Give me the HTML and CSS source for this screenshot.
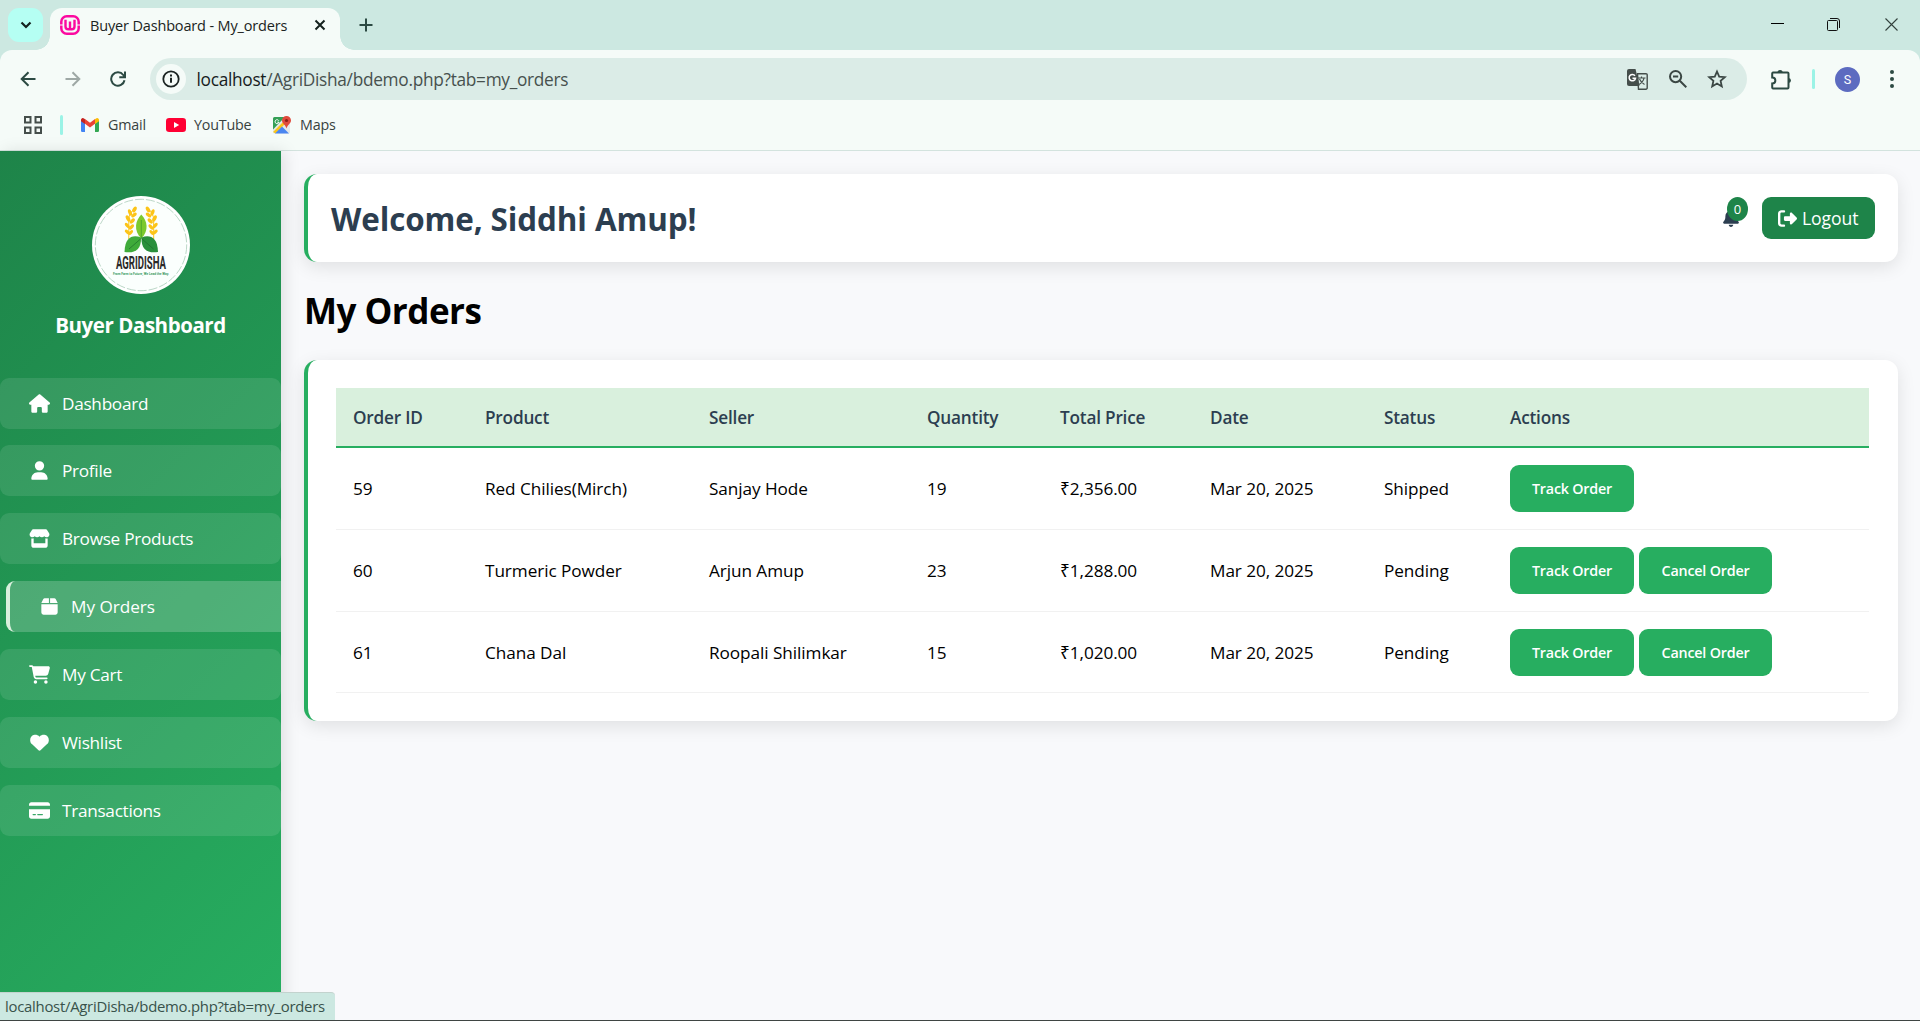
FILE: index.html
```html
<!DOCTYPE html>
<html lang="en">
<head>
<meta charset="utf-8">
<title>Buyer Dashboard - My_orders</title>
<link rel="stylesheet" href="styles.css">
</head>
<body>
<header class="browser">
  <div class="tabstrip">
    <div class="tab-search"><svg width="12" height="8" viewBox="0 0 12 8"><path d="M1.5 1.5 6 6l4.500-4.500" fill="none" stroke="#14211e" stroke-width="2.200"/></svg></div>
    <div class="tab">
      <svg class="favicon" width="20" height="20" viewBox="0 0 20 20" fill="none" stroke="#fb0aa0"><rect x="1.300" y="1.300" width="17.400" height="17.400" rx="5.500" stroke-width="2.500"/><path d="M5.500 4.800v6.700a2.800 2.800 0 0 0 2.800 2.800h3.400a2.800 2.800 0 0 0 2.800-2.800V4.800M10 6.500v7.500" stroke-width="2.400"/><path d="M0 10h3M17 10h3" stroke="#f5fbf8" stroke-width="1.200"/></svg>
      <span class="tab-title">Buyer Dashboard - My_orders</span>
      <svg class="tab-close" width="12" height="12" viewBox="0 0 12 12"><path d="m1.500 1.500 9 9m0-9-9 9" stroke="#14211e" stroke-width="2"/></svg>
    </div>
    <svg class="new-tab" width="14" height="14" viewBox="0 0 14 14"><path d="M7 .5v13M.5 7h13" stroke="#2c4a43" stroke-width="2"/></svg>
    <div class="window-controls">
      <svg width="13" height="13" viewBox="0 0 13 13"><path d="M0 5.500h13" stroke="#000"/></svg>
      <svg width="13" height="13" viewBox="0 0 13 13" fill="none" stroke="#111"><rect x=".5" y="2.500" width="10" height="10" rx="1"/><path d="M3 .5h7a2.500 2.500 0 0 1 2.500 2.500v7"/></svg>
      <svg width="13" height="13" viewBox="0 0 13 13"><path d="m.5.5 12 12m0-12-12 12" stroke="#33413d" stroke-width="1.100"/></svg>
    </div>
  </div>
  <div class="toolbar">
    <nav class="nav-buttons">
      <svg width="16" height="16" viewBox="0 0 16 16" fill="none" stroke="#2c4a43" stroke-width="2"><path d="M15.500 8H2M8.500 1.200 1.700 8l6.800 6.800"/></svg>
      <svg width="16" height="16" viewBox="0 0 16 16" fill="none" stroke="#9ea8a5" stroke-width="2"><path d="M.5 8H14M7.500 1.200 14.300 8l-6.800 6.800"/></svg>
      <svg width="16" height="16" viewBox="0 0 16 16" fill="none" stroke="#2c4a43" stroke-width="2"><path d="M14.500 9.200A6.700 6.700 0 1 1 13.300 4L14.800 6M15 .5v5.700H9.300"/></svg>
    </nav>
    <div class="omnibox">
      <span class="site-info"><svg width="18" height="18" viewBox="0 0 18 18"><circle cx="9" cy="9" r="7.700" fill="none" stroke="#1b2422" stroke-width="1.800"/><path d="M9 7.700v5M9 4.600v2" stroke="#1b2422" stroke-width="2"/></svg></span>
      <span class="url"><b>localhost</b>/AgriDisha/bdemo.php?tab=my_orders</span>
      <div class="omnibox-actions">
        <svg width="21" height="21" viewBox="0 0 21 21"><path d="M10.500 4.700H19a1.200 1.200 0 0 1 1.200 1.200V19a1.200 1.200 0 0 1-1.200 1.200h-7.500z" fill="none" stroke="#454e4b" stroke-width="1.400"/><path d="M2 0h6.500l4 17H2a2 2 0 0 1-2-2V2a2 2 0 0 1 2-2z" fill="#454e4b"/><path d="M8 6.800A3.200 3.200 0 1 0 8.500 9.300H5.500" fill="none" stroke="#fff" stroke-width="1.500"/><path d="M11 9h7.500M14.500 7.500V9M17 9c-.5 3-2.500 5-5 6.500M12.500 10c1 2.500 2.500 4 5 5.500" fill="none" stroke="#454e4b" stroke-width="1.200"/></svg>
        <svg width="18" height="18" viewBox="0 0 18 18" fill="none" stroke="#3b4744" stroke-width="2"><circle cx="6.600" cy="6.600" r="5.600"/><path d="m10.800 10.800 6.500 6.500M4 6.600h5.200"/></svg>
        <svg width="20" height="20" viewBox="0 0 20 20"><path d="m10 2.500 2.200 5.200 5.600.5-4.200 3.700 1.200 5.500-4.800-2.900-4.800 2.900 1.200-5.500L2.200 8.200l5.600-.5z" fill="none" stroke="#3b4744" stroke-width="1.800"/></svg>
      </div>
    </div>
    <svg class="extensions" width="21" height="21" viewBox="0 0 21 21"><path d="M2 3.500h14.500a1 1 0 0 1 1 1V18.500a1 1 0 0 1-1 1H2a1 1 0 0 1-.800-1v-4c4.200 0 4.200-6 0-6v-4a1 1 0 0 1 .800-1z" fill="none" stroke="#2c4a43" stroke-width="2"/><path d="M6.500 3.500a2.600 2.600 0 0 1 5.200 0zM17.500 9a2.500 2.500 0 0 1 0 5z" fill="#2c4a43"/></svg>
    <i class="divider"></i>
    <span class="avatar">S</span>
    <svg class="more" width="4" height="18" viewBox="0 0 4 18" fill="#2c4a43"><circle cx="2" cy="2" r="2"/><circle cx="2" cy="9" r="2"/><circle cx="2" cy="16" r="2"/></svg>
  </div>
  <div class="bookmarks">
    <svg class="apps" width="18" height="18" viewBox="0 0 18 18" fill="none" stroke="#454e4b" stroke-width="2"><path d="M1 1h5.500v5.500H1zM11.500 1H17v5.500h-5.500zM1 11.500h5.500V17H1zM11.500 11.500H17V17h-5.500z"/></svg>
    <i class="divider"></i>
    <span class="bookmark gmail"><svg width="18" height="14" viewBox="0 0 18 14"><path d="M0 2.500 4 5.500V14H1.200A1.200 1.200 0 0 1 0 12.800z" fill="#4285f4"/><path d="m14 5.500 4-3v10.300a1.200 1.200 0 0 1-1.200 1.200H14z" fill="#34a853"/><path d="M4 1 9 4.800 14 1v4.800L9 9.600 4 5.800z" fill="#ea4335"/><path d="M0 3.200V2A1.900 1.900 0 0 1 3 .4l1 .8v4.900z" fill="#c5221f"/><path d="M18 3.200V2a1.900 1.900 0 0 0-3-1.600l-1 .8v4.900z" fill="#fbbc04"/></svg><span class="bookmark-name">Gmail</span></span>
    <span class="bookmark youtube"><svg width="20" height="14" viewBox="0 0 20 14"><rect width="20" height="14" rx="3.200" fill="#f03"/><path d="m8 4 5.200 3L8 10z" fill="#fff"/></svg><span class="bookmark-name">YouTube</span></span>
    <span class="bookmark maps"><svg width="18" height="18" viewBox="0 0 18 18"><rect y="1" width="17" height="16.500" rx="1.500" fill="#e4e8e9"/><path d="M1.500 1H12L0 13.500V2.500A1.500 1.500 0 0 1 1.500 1z" fill="#34a056"/><path d="M0 16 12 4l2 2L2.500 17.500z" fill="#fbc51b"/><path d="m9 10.500 7 7H2z" fill="#4a86f0"/><path d="M13.500 0A4.500 4.500 0 0 0 9 4.500c0 3 3.500 4 4.500 8 1-4 4.500-5 4.500-8A4.500 4.500 0 0 0 13.500 0z" fill="#e04a3c"/><circle cx="13.500" cy="4.500" r="1.600" fill="#8c1f17"/><path d="M5.800 4.700A2 2 0 1 0 6 6.200H4.300" fill="none" stroke="#fff"/></svg><span class="bookmark-name">Maps</span></span>
  </div>
</header>

<div class="page">
  <aside class="sidebar">
    <svg class="logo" viewBox="0 0 98 98">
      <circle cx="49" cy="49" r="49" fill="#fff"/>
      <circle cx="49" cy="49" r="45.700" fill="#fbfffd" stroke="#a9cdb9" stroke-width=".8" stroke-dasharray="9 2"/>
      <g id="wheat" fill="#fcc418"><path d="M36.800 43V24c0-5 3-9 6-12" fill="none" stroke="#fcc418" stroke-width="1"/><ellipse cx="42.500" cy="13.500" rx="1.800" ry="3.200" transform="rotate(30 42.500 13.500)"/><ellipse cx="38" cy="16.500" rx="1.800" ry="3.400" transform="rotate(-20 38 16.500)"/><ellipse cx="42" cy="19" rx="1.700" ry="3.200" transform="rotate(50 42 19)"/><ellipse cx="36" cy="22.500" rx="1.800" ry="3.400" transform="rotate(-30 36 22.500)"/><ellipse cx="40.300" cy="25" rx="1.700" ry="3.200" transform="rotate(45 40.300 25)"/><ellipse cx="35.300" cy="29.500" rx="1.700" ry="3.200" transform="rotate(-40 35.300 29.500)"/><ellipse cx="39.500" cy="31" rx="1.700" ry="3.200" transform="rotate(40 39.500 31)"/><ellipse cx="35.300" cy="36" rx="1.600" ry="3" transform="rotate(-50 35.300 36)"/><ellipse cx="38.700" cy="36.500" rx="1.600" ry="3" transform="rotate(40 38.700 36.500)"/></g>
      <use href="#wheat" transform="matrix(-1 0 0 1 98.500 0)"/>
      <path d="M49.300 18.500c6 6 8 16 0 24-8-8-6-18 0-24z" fill="#7bc92e"/><path d="M49.300 24v19" stroke="#3c9a2c" stroke-width=".7"/>
      <path d="M49 41.500c-8-3-16-1-16.500 14.500 10 1.500 17-2 16.500-14.500z" fill="#3fab3a"/><path d="M49.500 41.500c8-3 16-1 16.500 14.500-10 1.500-17-2-16.500-14.500z" fill="#2a8f3c"/>
      <path d="M48.500 43 37 53m13-10 11.500 10" stroke="#1d6e2b" stroke-width=".7"/>
      <text class="logo-name" x="24" y="73" textLength="50" lengthAdjust="spacingAndGlyphs">AGRIDISHA</text>
      <text class="logo-motto" x="21" y="78.500" textLength="56" lengthAdjust="spacingAndGlyphs">From Farm to Future, We Lead the Way.</text>
    </svg>
    <h2 class="brand">Buyer Dashboard</h2>
    <nav class="menu">
      <a class="item"><svg viewBox="0 0 576 512"><path d="M575.8 255.5c0 18-15 32.100-32 32.100h-32l.7 160.200c0 2.700-.2 5.400-.5 8.100V472c0 22.100-17.900 40-40 40H456c-1.100 0-2.200 0-3.300-.1c-1.400 .1-2.800 .1-4.200 .1H416 392c-22.100 0-40-17.900-40-40V448 384c0-17.700-14.300-32-32-32H256c-17.700 0-32 14.300-32 32v64 24c0 22.100-17.900 40-40 40H160 128.100c-1.500 0-3-.1-4.500-.2c-1.200 .1-2.400 .2-3.600 .2H104c-22.100 0-40-17.900-40-40V360c0-.9 0-1.900 .1-2.800V287.600H32c-18 0-32-14-32-32.100c0-9 3-17 10-24L266.400 8c7-7 15-8 22-8s15 2 21 7L564.800 231.500c8 7 12 15 11 24z"/></svg>Dashboard</a>
      <a class="item"><svg viewBox="-64 0 576 512"><path d="M224 256A128 128 0 1 0 224 0a128 128 0 1 0 0 256zm-45.700 48C79.800 304 0 383.800 0 482.300C0 498.700 13.300 512 29.700 512H418.300c16.400 0 29.700-13.300 29.700-29.700C448 383.800 368.200 304 269.700 304H178.300z"/></svg>Profile</a>
      <a class="item"><svg viewBox="0 0 576 512"><path d="M547.600 103.800L490.300 13.100C485.200 5 476.100 0 466.400 0H109.600C99.900 0 90.800 5 85.700 13.100L28.300 103.800c-29.600 46.800-3.400 111.900 51.900 119.400c4 .5 8.100 .8 12.100 .8c26.100 0 49.300-11.400 65.200-29c15.900 17.600 39.100 29 65.200 29c26.100 0 49.300-11.400 65.200-29c15.900 17.600 39.100 29 65.200 29c26.200 0 49.300-11.400 65.200-29c16 17.600 39.100 29 65.200 29c4.100 0 8.100-.3 12.100-.8c55.500-7.400 81.800-72.500 52.100-119.400zM499.700 254.900l-.1 0c-5.300 .7-10.700 1.100-16.200 1.100c-12.400 0-24.300-1.900-35.400-5.300V384H128V250.600c-11.200 3.500-23.200 5.400-35.600 5.400c-5.500 0-11-.4-16.300-1.100l-.1 0c-4.100-.6-8.100-1.300-12-2.300V384v64c0 35.300 28.700 64 64 64H448c35.300 0 64-28.700 64-64V384 252.600c-4 1-8 1.800-12.300 2.300z"/></svg>Browse Products</a>
      <a class="item active"><svg viewBox="-64 0 576 512"><path d="M50.700 58.500L0 160H208V32H93.700C75.500 32 58.900 42.300 50.700 58.500zM240 160H448L397.300 58.500C389.100 42.300 372.500 32 354.300 32H240V160zm208 32H0V416c0 35.300 28.700 64 64 64H384c35.300 0 64-28.700 64-64V192z"/></svg>My Orders</a>
      <a class="item"><svg viewBox="0 0 576 512"><path d="M0 24C0 10.700 10.700 0 24 0H69.500c22 0 41.500 12.800 50.600 32h411c26.300 0 45.500 25 38.600 50.400l-41 152.300c-8.500 31.400-37 53.300-69.500 53.300H170.700l5.400 28.500c2.200 11.300 12.100 19.500 23.600 19.500H488c13.300 0 24 10.700 24 24s-10.700 24-24 24H199.700c-34.600 0-64.300-24.600-70.700-58.500L77.400 54.500c-.7-3.800-4-6.500-7.900-6.500H24C10.700 48 0 37.300 0 24zM128 464a48 48 0 1 1 96 0 48 48 0 1 1 -96 0zm336-48a48 48 0 1 1 0 96 48 48 0 1 1 0-96z"/></svg>My Cart</a>
      <a class="item"><svg viewBox="-32 0 576 512"><path d="M47.600 300.400L228.300 469.100c7.500 7 17.400 10.900 27.700 10.900s20.200-3.900 27.700-10.900L464.400 300.400c30.400-28.300 47.600-68 47.600-109.500v-5.800c0-69.900-50.500-129.500-119.400-141C347 36.500 300.600 51.400 268 84L256 96 244 84c-32.600-32.600-79-47.500-124.600-39.900C50.500 55.600 0 115.200 0 185.100v5.800c0 41.500 17.200 81.200 47.600 109.500z"/></svg>Wishlist</a>
      <a class="item"><svg viewBox="0 0 576 512"><path d="M64 32C28.700 32 0 60.700 0 96v32H576V96c0-35.300-28.700-64-64-64H64zM576 224H0V416c0 35.300 28.700 64 64 64H512c35.300 0 64-28.700 64-64V224zM112 352h64c8.800 0 16 7.200 16 16s-7.200 16-16 16H112c-8.800 0-16-7.200-16-16s7.200-16 16-16zm112 16c0-8.800 7.200-16 16-16H368c8.800 0 16 7.200 16 16s-7.200 16-16 16H240c-8.800 0-16-7.200-16-16z"/></svg>Transactions</a>
    </nav>
  </aside>

  <main class="content">
    <section class="card welcome">
      <h1 class="greeting">Welcome, Siddhi Amup!</h1>
      <div class="welcome-actions">
        <div class="bell"><svg width="16" height="18" viewBox="0 0 448 512"><path d="M224 0c-17.700 0-32 14.300-32 32V51.200C119 66 64 130.600 64 208v18.800c0 47-17.300 92.400-48.500 127.600l-7.400 8.300c-8.400 9.400-10.400 22.900-5.300 34.400S19.400 416 32 416H416c12.600 0 24-7.400 29.200-18.900s3.100-25-5.300-34.400l-7.400-8.300C401.300 319.200 384 273.900 384 226.800V208c0-77.400-55-142-128-156.800V32c0-17.700-14.300-32-32-32zm45.300 493.300c12-12 18.700-28.300 18.700-45.300H224 160c0 17 6.700 33.300 18.700 45.300s28.300 18.700 45.300 18.700s33.300-6.700 45.300-18.700z"/></svg><span class="count">0</span></div>
        <a class="logout"><svg width="19" height="19" viewBox="0 0 512 512"><path d="M377.900 105.900L500.700 228.700c7.200 7.200 11.300 17.100 11.300 27.300s-4.100 20.100-11.300 27.300L377.900 406.100c-6.400 6.400-15 9.900-24 9.900c-18.700 0-33.900-15.200-33.900-33.900l0-62.100-128 0c-17.700 0-32-14.300-32-32l0-64c0-17.700 14.300-32 32-32l128 0 0-62.100c0-18.700 15.200-33.900 33.900-33.900c9 0 17.600 3.600 24 9.900zM160 96L96 96c-17.700 0-32 14.300-32 32l0 256c0 17.700 14.300 32 32 32l64 0c17.700 0 32 14.300 32 32s-14.300 32-32 32l-64 0c-53 0-96-43-96-96L0 128C0 75 43 32 96 32l64 0c17.700 0 32 14.300 32 32s-14.300 32-32 32z"/></svg>Logout</a>
      </div>
    </section>
    <h1 class="title">My Orders</h1>
    <section class="card orders">
      <table class="table">
        <colgroup><col class="c-id"><col class="c-product"><col class="c-seller"><col class="c-qty"><col class="c-total"><col class="c-date"><col class="c-status"><col></colgroup>
        <thead><tr><th>Order ID</th><th>Product</th><th>Seller</th><th>Quantity</th><th>Total Price</th><th>Date</th><th>Status</th><th>Actions</th></tr></thead>
        <tbody>
          <tr><td>59</td><td>Red Chilies(Mirch)</td><td>Sanjay Hode</td><td>19</td><td>₹2,356.00</td><td>Mar 20, 2025</td><td>Shipped</td><td><div class="actions"><button class="btn track">Track Order</button></div></td></tr>
          <tr><td>60</td><td>Turmeric Powder</td><td>Arjun Amup</td><td>23</td><td>₹1,288.00</td><td>Mar 20, 2025</td><td>Pending</td><td><div class="actions"><button class="btn track">Track Order</button><button class="btn cancel">Cancel Order</button></div></td></tr>
          <tr><td>61</td><td>Chana Dal</td><td>Roopali Shilimkar</td><td>15</td><td>₹1,020.00</td><td>Mar 20, 2025</td><td>Pending</td><td><div class="actions"><button class="btn track">Track Order</button><button class="btn cancel">Cancel Order</button></div></td></tr>
        </tbody>
      </table>
    </section>
  </main>
</div>
<div class="status-bubble">localhost/AgriDisha/bdemo.php?tab=my_orders</div>
</body>
</html>
```
FILE: styles.css
```css
* { box-sizing: border-box; }
body {
  margin: 0;
  height: 1021px;
  display: flex;
  flex-direction: column;
  overflow: hidden;
  background: #f8f9fb;
  border-bottom: 1px solid #3f4543;
  font-family: "Open Sans", "Noto Sans", sans-serif;
  font-size: 17.2px;
  color: #000;
}
svg { display: block; flex: none; }

/* Browser frame */
.browser { flex: none; height: 151px; background: #cce8e1; border-bottom: 1px solid #d3e3de; }
.tabstrip { display: flex; height: 50px; padding-left: 8px; align-items: flex-start; }
.tab-search {
  width: 35px; height: 34px; margin-top: 8px; border-radius: 11px; background: #b5fff3;
  display: flex; align-items: center; justify-content: center;
}
.tab {
  position: relative;
  display: flex; align-items: center;
  width: 290px; height: 42px; margin: 8px 0 0 7px; padding: 0 14px 8px 10px;
  background: #f5fbf8; border-radius: 12px 12px 0 0;
}
.tab::before, .tab::after {
  content: ""; position: absolute; bottom: 0; width: 14px; height: 14px;
}
.tab::before { left: -14px; background: radial-gradient(circle at 0 0, transparent 13.5px, #f5fbf8 14px); }
.tab::after { right: -14px; background: radial-gradient(circle at 100% 0, transparent 13.5px, #f5fbf8 14px); }
.tab-title { margin-left: 10px; font-size: 14.5px; letter-spacing: -0.16px; color: #1a2422; white-space: nowrap; }
.tab-close { margin-left: auto; }
.new-tab { margin: 18px 0 0 19px; }
.window-controls { display: flex; gap: 44px; margin: 18px 22px 0 auto; }
.window-controls svg:nth-child(2) { margin: 0 1px 0 -1px; }
.toolbar { display: flex; align-items: center; height: 58px; padding: 0 26px 0 20px; background: #f5fbf8; border-radius: 12px 12px 0 0; }
.nav-buttons { display: flex; gap: 29px; }
.omnibox {
  display: flex; align-items: center;
  flex: none; width: 1597px; height: 42px; margin-left: 24px; padding: 0 20px 0 6px;
  background: #dbece7; border-radius: 21px;
}
.site-info { width: 30px; height: 30px; border-radius: 50%; background: #f5fbf8; display: flex; align-items: center; justify-content: center; }
.url { margin-left: 10.500px; font-size: 17.3px; letter-spacing: -0.3px; color: #47514e; }
.url b { font-weight: 400; color: #16201d; }
.omnibox-actions { display: flex; align-items: center; gap: 20.5px; margin-left: auto; }
.extensions { margin-left: 24px; }
.divider { width: 3px; height: 20px; border-radius: 2px; background: #9bf3e6; }
.toolbar .divider { margin-left: 20px; }
.avatar {
  width: 25px; height: 25px; margin-left: 20px; border-radius: 50%;
  background: #5c6bc0; color: #fff; font: 12.5px/25px Roboto, sans-serif; text-align: center;
}
.more { margin-left: auto; }
.bookmarks {
  display: flex; align-items: center; height: 42px; padding: 0 0 8px 23.500px;
  background: #f5fbf8; color: #38423f; font-size: 14.3px; letter-spacing: -0.2px;
}
.bookmarks .divider { margin: 0 18px 0 18.500px; }
.bookmark { display: flex; align-items: center; }
.bookmark svg { margin-right: 9px; }
.bookmark-name { padding-bottom: 2px; }
.gmail { width: 85px; }
.youtube { width: 107px; }
.youtube svg { margin-right: 8px; }

/* Page */
.page { flex: 1; display: flex; min-height: 0; }
.sidebar {
  flex: none; width: 281px; padding-top: 45px;
  background: linear-gradient(135deg, #1e8449, #27ae60);
  box-shadow: 4px 0 15px rgba(0, 0, 0, 0.1);
  color: #fff;
}
.logo { width: 98px; height: 98px; margin: 0 auto; overflow: visible; }
.logo-name { font: 700 18px "Roboto", sans-serif; fill: #2b2a29; }
.logo-motto { font: 700 4px "Roboto", sans-serif; fill: #3d9a63; }
.brand { margin: 17px 0 38.600px; font-size: 20.5px; line-height: 28px; letter-spacing: -0.45px; text-align: center; }
.menu { display: flex; flex-direction: column; gap: 16.85px; }
.item {
  display: flex; align-items: center; gap: 12px;
  height: 51px; padding-left: 29px; border-radius: 9px;
  background: rgba(255, 255, 255, 0.1); letter-spacing: -0.28px;
}
.item svg { width: 21px; height: 19px; fill: #fff; }
.item.active {
  margin-left: 6px; padding-left: 29px; gap: 11px;
  border-left: 4px solid #d9f0dd; border-radius: 9px 0 0 9px;
  background: rgba(255, 255, 255, 0.2); letter-spacing: -0.05px;
}
.content { flex: 1; padding: 23px 22px 0 23px; }
.card { background: #fff; border-left: 4px solid #27ae60; border-radius: 13px; box-shadow: 0 5px 18px rgba(0, 0, 0, 0.1); }
.welcome { display: flex; align-items: center; justify-content: space-between; height: 88px; padding: 0 23px 0 23px; }
.greeting { margin: 0; font-size: 31.4px; letter-spacing: -0.1px; color: #2c3e50; }
.welcome-actions { display: flex; align-items: center; }
.bell { position: relative; margin-right: 23px; }
.bell svg { fill: #2c3e50; }
.count {
  position: absolute; left: 4px; top: -12px; width: 21px; height: 24px; border-radius: 50%;
  background: #1e8449; color: #fff; font-size: 13px; line-height: 24px; text-align: center;
}
.logout {
  display: flex; align-items: center; gap: 5px; width: 113px; height: 42px; padding-left: 16px;
  border-radius: 9px; background: #1e8449; color: #fff; font-size: 17.6px; letter-spacing: -0.1px;
}
.logout svg { fill: #fff; }
.title { margin: 24px 0 25px; font-size: 35px; line-height: 49px; letter-spacing: -0.5px; }
.orders { padding: 28px 29px 28px 28px; }
.table { width: 100%; border-collapse: separate; border-spacing: 0; table-layout: fixed; letter-spacing: -0.07px; }
.c-id { width: 132px; }
.c-product { width: 224px; }
.c-seller { width: 218px; }
.c-qty { width: 133px; }
.c-total { width: 150px; }
.c-date { width: 174px; }
.c-status { width: 126px; }
.table th {
  height: 60px; padding: 0 17px; text-align: left; font-weight: 600; color: #2c3e50; letter-spacing: -0.2px;
  background: #d9f0dd; border-bottom: 2px solid #27ae60;
}
.table td { height: 82px; padding: 0 17px; border-bottom: 1px solid #f1f1f1; }
.table tr:last-child td { height: 81px; }
.actions { display: flex; gap: 5px; }
.btn {
  height: 47px; padding: 0; border: 0; border-radius: 9px; background: #27ae60; color: #fff;
  font: 600 14.3px "Open Sans", sans-serif; letter-spacing: -0.2px;
}
.track { width: 124px; }
.cancel { width: 133px; }

/* Link target shown over the page's lower left corner */
.status-bubble {
  position: absolute; left: 0; bottom: 1px; width: 335px; height: 28px; padding-left: 5px;
  background: #cce8e1; color: #38524b; border-radius: 0 4px 0 0; border-top: 1px solid #c3d3ce;
  font-size: 14.9px; line-height: 27px; letter-spacing: -0.27px; white-space: nowrap;
}
```
